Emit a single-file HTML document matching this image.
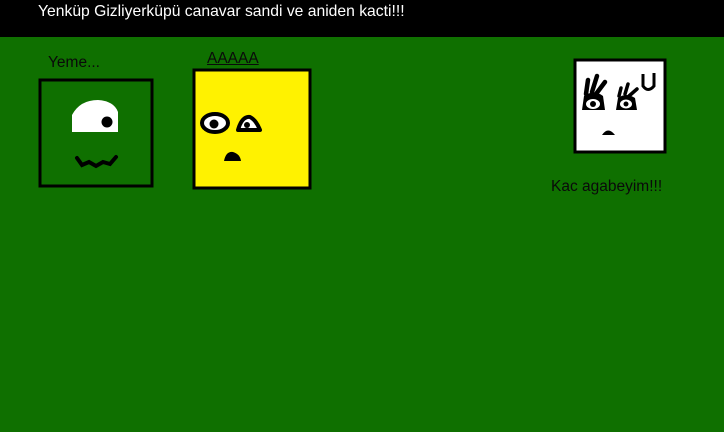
<!DOCTYPE html>
<html><head><meta charset="utf-8"><style>
html,body{margin:0;padding:0}
body{width:724px;height:432px;background:#0f7000;position:relative;overflow:hidden;font-family:"Liberation Sans","DejaVu Sans",sans-serif}
.hdr{position:absolute;left:0;top:0;width:724px;height:37px;background:#000}
.t{position:absolute;white-space:nowrap;font-size:15.5px;color:#0a0a0a}
</style></head><body>
<div class="hdr"></div>
<div class="t" style="left:38px;top:3px;color:#fff;font-size:15.7px">Yenküp Gizliyerküpü canavar sandi ve aniden kacti!!!</div>
<div class="t" style="left:48px;top:54px">Yeme...</div>
<div class="t" style="left:207px;top:50px;text-decoration:underline">AAAAA</div>
<div class="t" style="left:551px;top:178px">Kac agabeyim!!!</div>
<svg width="724" height="432" style="position:absolute;left:0;top:0">
<rect x="40" y="80" width="112" height="106" fill="none" stroke="#000" stroke-width="3"/>
<path d="M72 132 L72 115 Q80 100 98 100 Q114 101 118 112 L118 132 Z" fill="#fff"/>
<circle cx="107" cy="122" r="5.5" fill="#000"/>
<path d="M77 158 L82 165 L89 162 L96 166 L103 162 L110 164 L116 157" fill="none" stroke="#000" stroke-width="4" stroke-linecap="round"/>
<rect x="194" y="70" width="116" height="118" fill="#fff200" stroke="#000" stroke-width="3"/>
<ellipse cx="215" cy="123" rx="13" ry="9" fill="#fff" stroke="#000" stroke-width="4"/>
<circle cx="214" cy="124" r="4.5" fill="#000"/>
<path d="M238 130 Q242 116 250 117 Q256 120 260 130 Z" fill="#fff" stroke="#000" stroke-width="4" stroke-linejoin="round"/>
<circle cx="247" cy="125" r="3" fill="#000"/>
<path d="M224 161 Q226 151 233 152 Q240 154 241 161 Z" fill="#000"/>
<rect x="575" y="60" width="90" height="92" fill="#fff" stroke="#000" stroke-width="3"/>
<path d="M586 94 L588 80 M592 92 L597 76 M596 94 L605 82" stroke="#000" stroke-width="4.5" fill="none" stroke-linecap="round"/>
<path d="M582 110 L584 96 Q594 89 603 96 L605 110 Z" fill="#000"/>
<ellipse cx="593" cy="104" rx="7" ry="5" fill="#fff"/><circle cx="593" cy="104" r="3" fill="#000"/>
<path d="M619 96 L621 88 M625 94 L628 84 M629 96 L637 89" stroke="#000" stroke-width="3.5" fill="none" stroke-linecap="round"/>
<path d="M616 110 L618 98 Q626 92 635 98 L637 110 Z" fill="#000"/>
<ellipse cx="626" cy="104" rx="6" ry="4.5" fill="#fff"/><circle cx="626" cy="104" r="2.5" fill="#000"/>
<path d="M643 74 L643 86 Q648 93 654 86 L654 73" stroke="#000" stroke-width="3" fill="none"/>
<path d="M602 135 Q608 126 615 135 Z" fill="#000"/>
</svg>
</body></html>
